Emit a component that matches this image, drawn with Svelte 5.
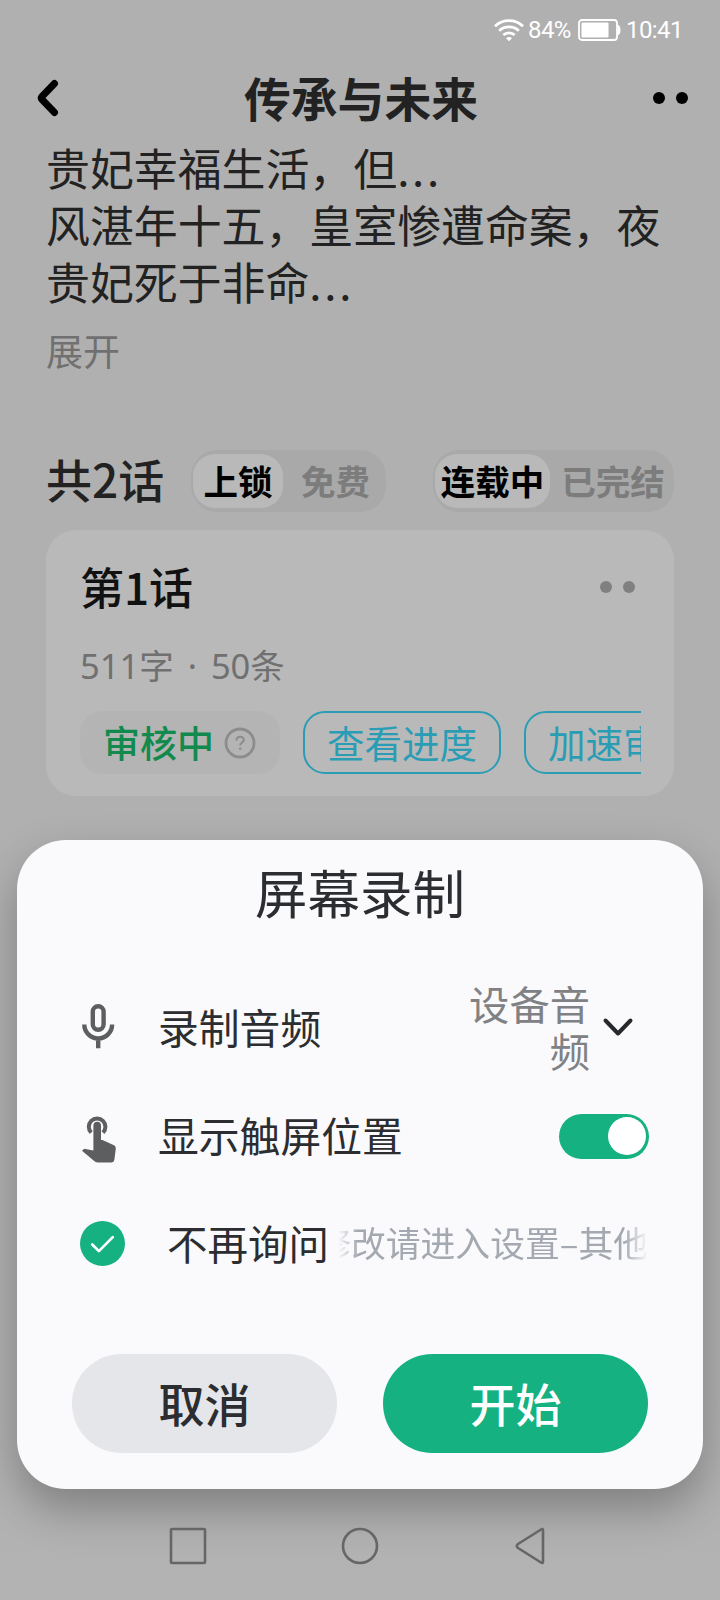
<script lang="ts">
  let locked = $state(true);
  let ongoing = $state(true);
  let showTouches = $state(true);
  let dontAsk = $state(true);

  const intro = ["贵妃幸福生活，但", "风湛年十五，皇室惨遭命案，夜", "贵妃死于非命"];
  const actions = ["查看进度", "加速审核"];
</script>

<div class="screen">
  <div class="status-bar">
    <svg class="wifi" viewBox="0 0 30 24" fill="none" stroke="#fff" stroke-width="2.8">
      <path d="M1 8.2a20.5 20.5 0 0 1 28 0" />
      <path d="M5.2 12.7a14.5 14.5 0 0 1 19.6 0" />
      <path d="M9.3 17a8.5 8.5 0 0 1 11.4 0" />
      <path d="M12 20.2q3-2.2 6 0l-3 3z" fill="#fff" stroke="none" />
    </svg>
    <span class="percent">84%</span>
    <svg class="battery" viewBox="0 0 43 22">
      <rect x="1" y="1" width="38" height="20" rx="3" fill="none" stroke="#fff" stroke-width="1.8" />
      <rect x="3.5" y="3.5" width="27" height="15" rx="1" fill="#fff" />
      <path d="M39.5 5.5q3 1 3 5.5t-3 5.5z" fill="#fff" />
    </svg>
    <span class="time">10:41</span>
  </div>

  <header>
    <svg class="back" viewBox="0 0 24 40" fill="none" stroke="#000" stroke-width="7" stroke-linecap="round" stroke-linejoin="round">
      <path d="M18.500 5.500L6 18.500Q4.600 20 6 21.500L18.500 34.500" />
    </svg>
    <h1>传承与未来</h1>
    <div class="dots"><i></i><i></i></div>
  </header>

  <main>
    <p class="intro">
      {#each intro as line, i}
        <span class="line">{line}{#if i !== 1}<span class="ellipsis">...</span>{/if}</span>
      {/each}
    </p>
    <button class="expand">展开</button>

    <div class="chapter-bar">
      <h2>共2话</h2>
      <div class="segment lock">
        <button class:active={locked} onclick={() => (locked = true)}>上锁</button>
        <button class:active={!locked} onclick={() => (locked = false)}>免费</button>
      </div>
      <div class="segment state">
        <button class:active={ongoing} onclick={() => (ongoing = true)}>连载中</button>
        <button class:active={!ongoing} onclick={() => (ongoing = false)}>已完结</button>
      </div>
    </div>

    <section class="card">
      <div class="card-head">
        <h3>第1话</h3>
        <div class="dots grey"><i></i><i></i></div>
      </div>
      <div class="meta">511字 · 50条</div>
      <div class="chips">
        <span class="chip review">
          审核中
          <svg viewBox="0 0 32 32" fill="none" stroke="#8c8c8c" stroke-width="2.8">
            <circle cx="16" cy="16" r="14" />
            <path d="M12.5 13.5c0-5 7.3-4.7 7.3-.6 0 2.6-3.6 2.7-3.6 5.6" stroke-width="2" />
            <circle cx="16.2" cy="21.7" r="1.3" fill="#8c8c8c" stroke="none" />
          </svg>
        </span>
        {#each actions as action}
          <button class="chip action">{action}</button>
        {/each}
      </div>
    </section>
  </main>

  <div class="dialog">
    <h2>屏幕录制</h2>

    <div class="row audio">
      <svg class="icon" viewBox="0 0 40 52" fill="none" stroke="#5c5e60" stroke-width="4.4">
        <rect x="13.8" y="5.2" width="10.8" height="23.5" rx="5.4" />
        <path d="M5.3 23.5a13.9 14 0 0 0 27.800 0M19.200 37.500v9.700" />
      </svg>
      <span class="label">录制音频</span>
      <span class="value">设备音频</span>
      <svg class="chevron" viewBox="0 0 32 20" fill="none" stroke="#26282b" stroke-width="4" stroke-linecap="round" stroke-linejoin="round">
        <path d="M3.5 3.5l12.500 13L28.500 3.500" />
      </svg>
    </div>

    <div class="row touch">
      <svg class="icon" viewBox="0 0 40 52">
        <path d="M12.2 19.6a8.3 8.3 0 1 1 11.800 0" fill="none" stroke="#5c5e60" stroke-width="4" />
        <path d="M14.4 12.5a3.8 3.8 0 0 1 7.6 0V27h1.5l11.500 5.300q2 1 1.800 3.200l-1.400 11q-.4 3-3.300 3H18.500q-2 0-3.300-1.400L3 37.800l1.400-1.300q.9-.8 2.100-.6l7.900 1.600z" fill="#5c5e60" />
      </svg>
      <span class="label">显示触屏位置</span>
      <button class="switch" class:on={showTouches} aria-label="显示触屏位置" onclick={() => (showTouches = !showTouches)}>
        <i></i>
      </button>
    </div>

    <div class="row ask">
      <button class="check" class:on={dontAsk} aria-label="不再询问" onclick={() => (dontAsk = !dontAsk)}>
        <svg viewBox="0 0 46 46" fill="none" stroke="#fff" stroke-width="2.8" stroke-linecap="round" stroke-linejoin="round">
          <path d="M12.500 24l6.800 6.800L33.500 16.500" />
        </svg>
      </button>
      <span class="label">不再询问</span>
      <div class="marquee"><span>修改请进入设置–其他</span></div>
    </div>

    <div class="buttons">
      <button class="cancel">取消</button>
      <button class="start">开始</button>
    </div>
  </div>

  <nav>
    <svg viewBox="0 0 40 40"><rect x="3" y="3" width="34" height="34" rx="1" /></svg>
    <svg viewBox="0 0 40 40"><circle cx="20" cy="20" r="17" /></svg>
    <svg viewBox="0 0 40 40"><path d="M31 4.5v31q0 2.500-2 1L6 22q-2.500-2 0-4L29 3.500q2-1.500 2 1z" /></svg>
  </nav>
</div>

<style>
  :global(body) {
    background: #b0b0b0;
  }

  .screen {
    position: relative;
    display: flex;
    flex-direction: column;
    width: 720px;
    height: 1600px;
    overflow: hidden;
    background: linear-gradient(#b0b0b0 1400px, #b3b3b4 1600px);
    font-family: "Noto Sans CJK SC", sans-serif;
    color: #222;
  }

  h1,
  h2,
  h3,
  p {
    margin: 0;
  }

  button {
    border: 0;
    padding: 0;
    background: none;
    font: inherit;
    color: inherit;
    white-space: nowrap;
  }

  svg {
    display: block;
    flex: none;
  }

  .status-bar {
    display: flex;
    align-items: center;
    height: 60px;
    padding-left: 494px;
    color: #fff;
    font-family: Roboto, sans-serif;
    font-size: 24px;
  }

  .wifi {
    width: 30px;
    height: 24px;
  }

  .percent {
    width: 46px;
    margin-left: 4px;
    letter-spacing: -0.6px;
  }

  .battery {
    width: 43px;
    height: 22px;
    margin-left: 4px;
  }

  .time {
    margin-left: 5px;
    letter-spacing: -0.6px;
  }

  header {
    display: flex;
    align-items: center;
    justify-content: space-between;
    height: 76px;
    padding: 0 32px 0 36px;
  }

  .back {
    width: 24px;
    height: 40px;
  }

  h1 {
    margin: -2px 0 0 9px;
    font-size: 46.8px;
    line-height: 60px;
    font-weight: 700;
  }

  .dots {
    display: flex;
    gap: 11px;
  }

  .dots i {
    width: 12px;
    height: 12px;
    border-radius: 50%;
    background: #000;
  }

  .dots.grey i {
    background: #808080;
  }

  main {
    padding: 3px 46px 0 46px;
  }

  .intro {
    font-size: 43.9px;
    line-height: 57px;
  }

  .line {
    display: block;
    white-space: nowrap;
  }

  .ellipsis {
    letter-spacing: 2.7px;
  }

  .expand {
    display: block;
    margin-top: 15px;
    height: 50px;
    font-size: 37px;
    line-height: 50px;
    color: #707070;
  }

  .chapter-bar {
    display: flex;
    align-items: center;
    height: 62px;
    margin-top: 75px;
  }

  .chapter-bar h2 {
    width: 145px;
    margin-top: -6px;
    font-size: 46px;
    line-height: 60px;
    font-weight: 500;
  }

  .segment {
    display: flex;
    box-sizing: border-box;
    height: 62px;
    padding: 4px 2px;
    border-radius: 26px;
    background: #a9a9a9;
    font-size: 34.5px;
    font-weight: 700;
    color: #7c7c7c;
  }

  .segment button {
    flex: 1;
    height: 54px;
    line-height: 50px;
    padding: 0 0 3px 4px;
    border-radius: 22px;
  }

  .segment .active {
    flex: none;
    padding-left: 0;
    background: #b9b9b9;
    color: #000;
  }

  .lock {
    width: 195px;
  }

  .lock .active {
    width: 90px;
  }

  .state {
    width: 241px;
    margin-left: auto;
  }

  .state .active {
    width: 115px;
  }

  .card {
    box-sizing: border-box;
    height: 266px;
    margin-top: 18px;
    padding: 27px 33px 0 34px;
    border-radius: 30px;
    background: #b9b9b9;
  }

  .card-head {
    display: flex;
    align-items: center;
    justify-content: space-between;
    height: 60px;
    padding-right: 6px;
  }

  h3 {
    margin-top: -3px;
    font-size: 44px;
    line-height: 60px;
    font-weight: 500;
    color: #111;
  }

  .meta {
    margin-top: 24px;
    font-family: "Noto Sans", "Noto Sans CJK SC", sans-serif;
    font-size: 34.5px;
    line-height: 50px;
    word-spacing: 5px;
    color: #707070;
  }

  .chips {
    display: flex;
    gap: 23px;
    margin-top: 20px;
    overflow: hidden;
  }

  .chip {
    display: flex;
    flex: none;
    align-items: center;
    box-sizing: border-box;
    height: 63px;
    padding: 0 24px 2px 23px;
    border-radius: 22px;
    font-size: 37.5px;
    line-height: 54px;
  }

  .review {
    width: 200px;
    background: #b3b4b3;
    color: #128a4e;
    font-size: 37px;
    font-weight: 500;
  }

  .review svg {
    width: 32px;
    height: 32px;
    margin: 3px 0 0 10px;
  }

  .action {
    padding: 0 22px 2px;
    border: 2px solid #2a9db5;
    color: #2a9db5;
  }

  .dialog {
    position: absolute;
    left: 17px;
    top: 840px;
    box-sizing: border-box;
    width: 686px;
    height: 649px;
    padding: 21px 55px 0;
    border-radius: 49px;
    background: #fafafc;
    box-shadow: 0 20px 44px rgba(0, 0, 0, 0.28);
    color: #2b2d30;
  }

  .dialog h2 {
    font-size: 52.5px;
    line-height: 60px;
    font-weight: 400;
    text-align: center;
  }

  .row {
    display: flex;
    align-items: center;
    height: 108px;
    font-size: 40.8px;
    line-height: 47px;
  }

  .audio {
    margin-top: 52px;
  }

  .icon {
    width: 40px;
    height: 52px;
    margin-left: 7px;
  }

  .touch .icon {
    margin-top: 7px;
  }

  .label {
    margin: -2px 0 0 39px;
    white-space: nowrap;
  }

  .value {
    width: 124px;
    margin: -2px 0 0 auto;
    color: #808184;
    text-align: right;
    font-size: 40.3px;
  }

  .chevron {
    width: 32px;
    height: 20px;
    margin: 0 14px 0 12px;
  }

  .switch {
    display: flex;
    align-items: center;
    box-sizing: border-box;
    width: 90px;
    height: 45px;
    margin: 2px -1px 0 auto;
    padding: 0 3px;
    border-radius: 23px;
    background: #c8c9cc;
  }

  .switch.on {
    justify-content: flex-end;
    background: #15b180;
  }

  .switch i {
    width: 38px;
    height: 38px;
    border-radius: 50%;
    background: #fff;
  }

  .check {
    width: 45px;
    height: 45px;
    margin-left: 8px;
    border-radius: 50%;
    background: #c8c9cc;
  }

  .check.on {
    background: #15b180;
  }

  .ask .label {
    margin-left: 42px;
    font-size: 40.5px;
  }

  .marquee {
    display: flex;
    justify-content: flex-end;
    flex: 1;
    height: 50px;
    margin: -2px 0 0 9px;
    overflow: hidden;
    color: #a3a8b1;
    font-size: 34.8px;
    line-height: 50px;
    white-space: nowrap;
    -webkit-mask-image: linear-gradient(90deg, transparent, #000 20px, #000 calc(100% - 24px), transparent);
    mask-image: linear-gradient(90deg, transparent, #000 20px, #000 calc(100% - 24px), transparent);
  }

  .buttons {
    display: flex;
    gap: 46px;
    margin-top: 57px;
  }

  .buttons button {
    flex: 1;
    height: 99px;
    padding-bottom: 4px;
    border-radius: 50px;
    font-size: 46px;
    font-weight: 500;
    line-height: 60px;
  }

  .cancel {
    background: #e5e6e9;
  }

  .start {
    background: #15b180;
    color: #fff;
  }

  nav {
    position: relative;
    display: flex;
    justify-content: space-between;
    margin-top: auto;
    padding: 0 168px 34px 168px;
  }

  nav svg {
    width: 40px;
    height: 40px;
    fill: none;
    stroke: #666;
    stroke-width: 2.6;
    stroke-linejoin: round;
  }
</style>
